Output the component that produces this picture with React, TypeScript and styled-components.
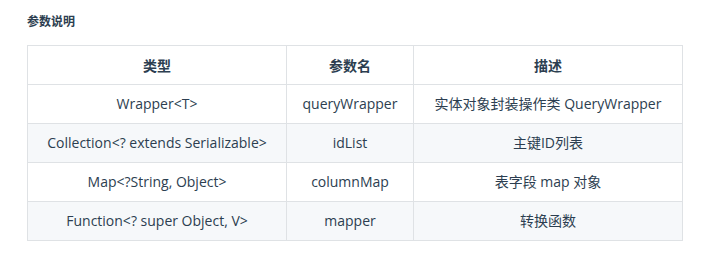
import React from 'react';
import styled, { createGlobalStyle } from 'styled-components';

const GlobalStyle = createGlobalStyle`
  body {
    margin: 0;
    background: #fff;
    font-family: "Open Sans", "Noto Sans CJK SC", sans-serif;
    color: #2c3e50;
  }
`;

const Page = styled.div`
  padding: 12px 34px 0 27px;
`;

const Title = styled.h4`
  margin: 0 0 16px;
  font-size: 12px;
  line-height: 17px;
  font-weight: bold;
  color: #2c3e50;
  font-family: "Noto Sans CJK SC", sans-serif;
`;

const Table = styled.table`
  width: 655px;
  table-layout: fixed;
  border-collapse: collapse;
  font-size: 14px;
`;

const Row = styled.tr<{ $striped?: boolean }>`
  background: ${p => (p.$striped ? '#f6f8fa' : '#fff')};
`;

const Col = styled.col<{ $w: number }>`
  width: ${p => p.$w}px;
`;

const Head = styled.th`
  border: 1px solid #dfe2e5;
  padding: 8px 0;
  line-height: 22px;
  font-weight: bold;
  text-align: center;
  font-family: "Noto Sans CJK SC", sans-serif;
`;

const Cell = styled.td`
  border: 1px solid #dfe2e5;
  padding: 8px 0;
  line-height: 22px;
  text-align: center;
  white-space: nowrap;
`;

const rows = [
  ['Wrapper<T>', 'queryWrapper', '实体对象封装操作类 QueryWrapper'],
  ['Collection<? extends Serializable>', 'idList', '主键ID列表'],
  ['Map<?String, Object>', 'columnMap', '表字段 map 对象'],
  ['Function<? super Object, V>', 'mapper', '转换函数'],
];

function App(): JSX.Element {
  return (
    <Page>
      <GlobalStyle />
      <Title>参数说明</Title>
      <Table>
        <colgroup>
          <Col $w={259} />
          <Col $w={127} />
          <Col $w={269} />
        </colgroup>
        <thead>
          <Row>
            <Head>类型</Head>
            <Head>参数名</Head>
            <Head>描述</Head>
          </Row>
        </thead>
        <tbody>
          {rows.map((r, i) => (
            <Row key={i} $striped={i % 2 === 1}>
              {r.map((c, j) => <Cell key={j}>{c}</Cell>)}
            </Row>
          ))}
        </tbody>
      </Table>
    </Page>
  );
}

export default App;
